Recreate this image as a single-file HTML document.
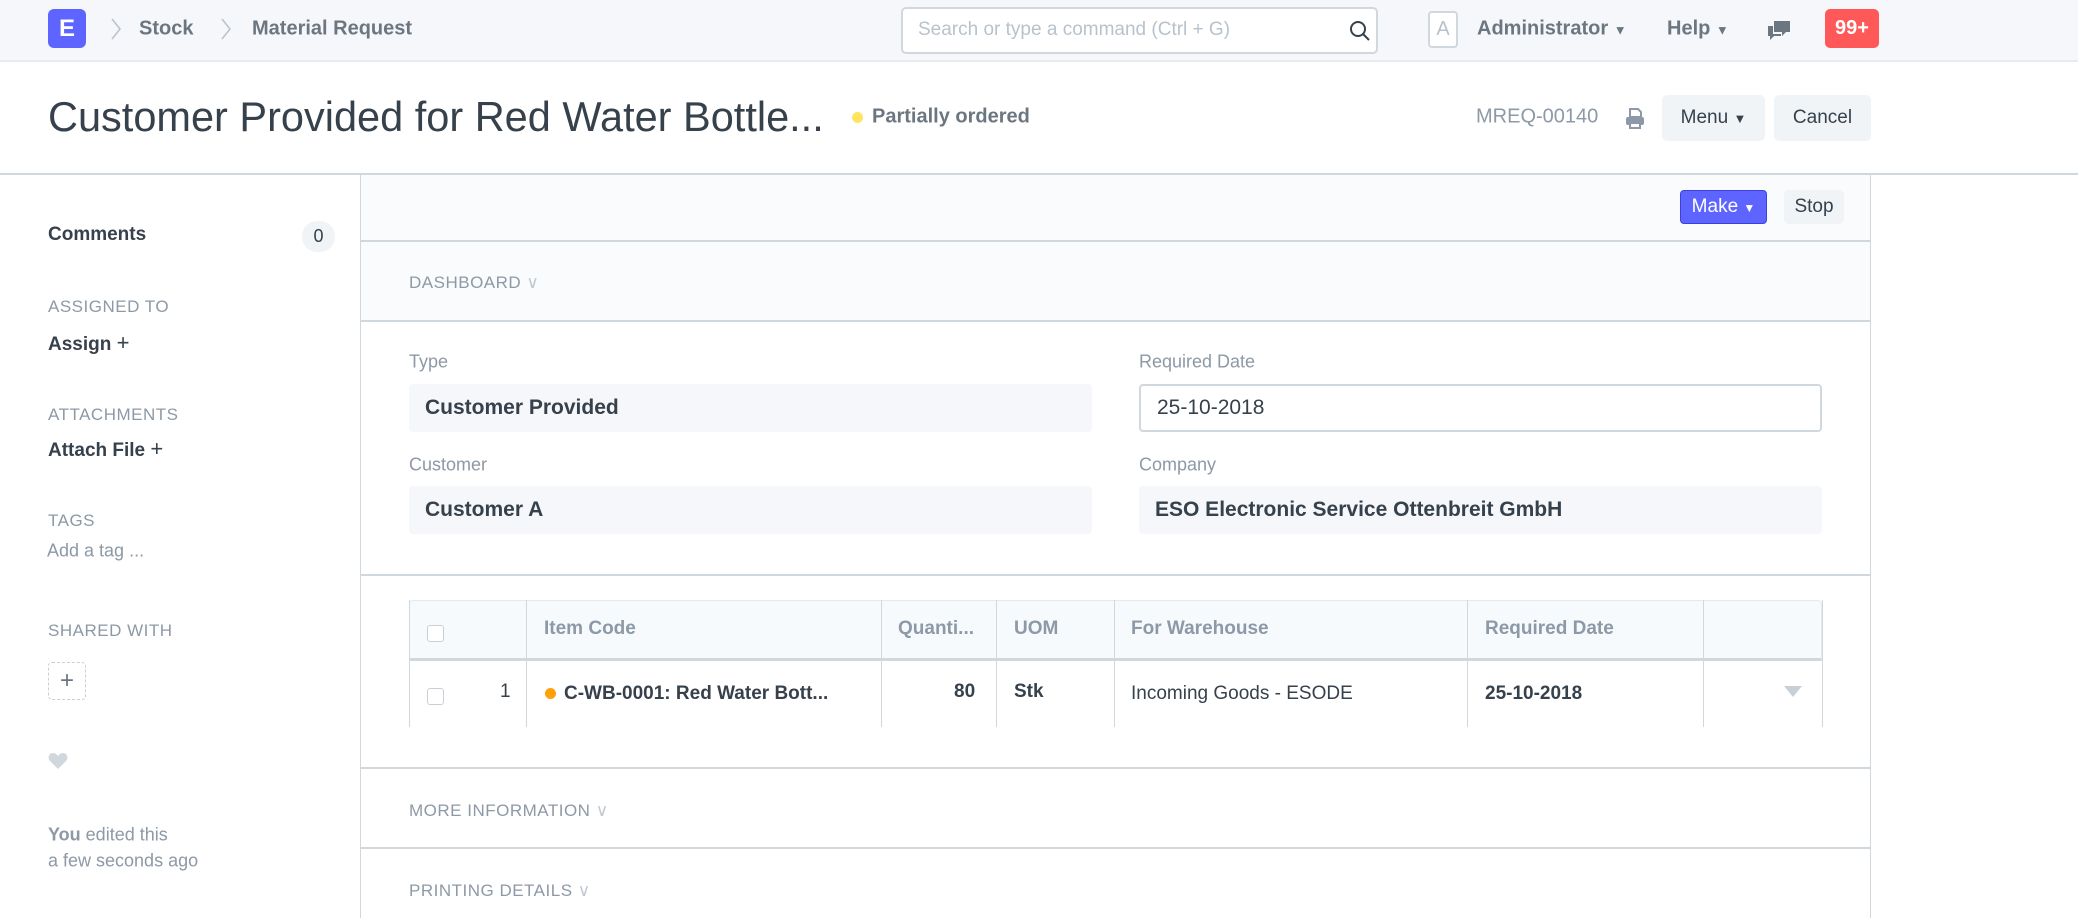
<!DOCTYPE html>
<html><head><meta charset="utf-8"><style>
*{box-sizing:border-box;margin:0;padding:0}
body{width:2078px;height:918px;overflow:hidden;background:#fff;font-family:"Liberation Sans",sans-serif;color:#36414c;position:relative}
.a{position:absolute;white-space:nowrap}
.nav{left:0;top:0;width:2078px;height:62px;background:#f5f7fa;border-bottom:2px solid #e8ebee}
.t{transform:translateY(-50%)}
.gray{color:#8d99a6}
.lbl{font-size:18px;color:#8d99a6}
.inp{background:#f5f7fa;border-radius:4px;height:48px;font-size:21px;font-weight:bold;color:#36414c;padding:0 16px;line-height:48px}
.btn{background:#f0f4f7;border-radius:5px;font-size:19px;color:#36414c;text-align:center}
.sec{font-size:17px;color:#8d99a6;letter-spacing:0.5px}
.hl{left:360px;width:1511px;height:2px;background:#d1d8dd}
.th{font-size:19px;font-weight:bold;color:#8d99a6}
.td{font-size:19px}
.vl{width:1px;background:#d1d8dd;top:600px;height:127px}
.cb{width:17px;height:17px;border:1px solid #c8cfd6;border-radius:3px;background:#fff}
</style></head><body>
<div class="a nav"></div>
<div class="a" style="left:48px;top:9px;width:38px;height:39px;background:#5e64ff;border-radius:6px;color:#fff;font-weight:bold;font-size:24px;text-align:center;line-height:39px">E</div>
<svg class="a" style="left:110px;top:18px" width="12" height="22" viewBox="0 0 12 22"><path d="M2 1l8 10-8 10" fill="none" stroke="#b8c2cc" stroke-width="1.5"/></svg>
<div class="a" style="left:139px;top:29px;font-size:20px;font-weight:bold;color:#6c7680" ><span class="t" style="display:block">Stock</span></div>
<svg class="a" style="left:220px;top:18px" width="12" height="22" viewBox="0 0 12 22"><path d="M2 1l8 10-8 10" fill="none" stroke="#b8c2cc" stroke-width="1.5"/></svg>
<div class="a" style="left:252px;top:29px;font-size:20px;font-weight:bold;color:#6c7680"><span class="t" style="display:block">Material Request</span></div>
<div class="a" style="left:901px;top:7px;width:477px;height:47px;background:#fff;border:2px solid #d1d8dd;border-radius:5px"></div>
<div class="a" style="left:918px;top:30px;font-size:19px;color:#b8c2cc"><span class="t" style="display:block">Search or type a command (Ctrl + G)</span></div>
<svg class="a" style="left:1348px;top:19px" width="24" height="24" viewBox="0 0 24 24"><circle cx="10" cy="10" r="7" fill="none" stroke="#36414c" stroke-width="2"/><path d="M15 15l6 6" stroke="#36414c" stroke-width="2"/></svg>
<div class="a" style="left:1428px;top:11px;width:30px;height:37px;border:2px solid #d1d8dd;border-radius:4px;background:#fff;color:#b8c2cc;font-size:20px;text-align:center;line-height:33px">A</div>
<div class="a" style="left:1477px;top:29px;font-size:20px;font-weight:bold;color:#6c7680"><span class="t" style="display:block">Administrator <span style="font-size:13px">▼</span></span></div>
<div class="a" style="left:1667px;top:29px;font-size:20px;font-weight:bold;color:#6c7680"><span class="t" style="display:block">Help <span style="font-size:13px">▼</span></span></div>
<svg class="a" style="left:1766px;top:19px" width="26" height="24" viewBox="0 0 26 24"><path d="M8 2h16v11h-4l-4 4v-4h-8z" fill="#6c7680"/><path d="M2 7h5v8h8v2h-7l-4 4v-4h-2z" fill="#6c7680"/></svg>
<div class="a" style="left:1825px;top:9px;width:54px;height:39px;background:#ff5858;border-radius:5px;color:#fff;font-weight:bold;font-size:20px;text-align:center;line-height:39px">99+</div>

<div class="a" style="left:48px;top:117px;font-size:41.5px;color:#36414c"><span class="t" style="display:block">Customer Provided for Red Water Bottle...</span></div>
<div class="a" style="left:852px;top:112px;width:11px;height:11px;border-radius:50%;background:#ffe55e"></div>
<div class="a" style="left:872px;top:117px;font-size:20px;font-weight:bold;color:#6c7680"><span class="t" style="display:block">Partially ordered</span></div>
<div class="a" style="left:1476px;top:117px;font-size:20px;color:#8d99a6"><span class="t" style="display:block">MREQ-00140</span></div>
<svg class="a" style="left:1624px;top:106px" width="22" height="24" viewBox="0 0 22 24"><path d="M6 3h8l3 3v5H6z" fill="none" stroke="#8d99a6" stroke-width="2"/><rect x="2" y="11" width="18" height="8" rx="2" fill="#8d99a6"/><rect x="6" y="17" width="10" height="5" fill="#fff" stroke="#8d99a6" stroke-width="2"/></svg>
<div class="a btn" style="left:1662px;top:95px;width:103px;height:46px;line-height:46px">Menu <span style="font-size:13px">▼</span></div>
<div class="a btn" style="left:1774px;top:95px;width:97px;height:46px;line-height:46px">Cancel</div>

<div class="a" style="left:0;top:173px;width:2078px;height:2px;background:#d1d8dd"></div>
<div class="a" style="left:360px;top:175px;width:1511px;height:743px;border-left:1px solid #d1d8dd;border-right:1px solid #d1d8dd"></div>
<div class="a" style="left:361px;top:175px;width:1509px;height:145px;background:#fafbfc"></div>
<div class="a" style="left:1680px;top:190px;width:87px;height:34px;background:#5e64ff;border:1px solid #3b41e0;border-radius:4px;color:#fff;font-size:19px;text-align:center;line-height:32px">Make <span style="font-size:12px">▼</span></div>
<div class="a btn" style="left:1784px;top:190px;width:60px;height:34px;line-height:34px">Stop</div>
<div class="a hl" style="top:240px"></div>
<div class="a sec" style="left:409px;top:283px"><span class="t" style="display:block">DASHBOARD <span style="color:#c0c8d0">∨</span></span></div>
<div class="a hl" style="top:320px"></div>

<div class="a lbl" style="left:409px;top:362px"><span class="t" style="display:block">Type</span></div>
<div class="a inp" style="left:409px;top:384px;width:683px">Customer Provided</div>
<div class="a lbl" style="left:1139px;top:362px"><span class="t" style="display:block">Required Date</span></div>
<div class="a inp" style="left:1139px;top:384px;width:683px;background:#fff;border:2px solid #d1d8dd;font-weight:normal;line-height:44px">25-10-2018</div>
<div class="a lbl" style="left:409px;top:465px"><span class="t" style="display:block">Customer</span></div>
<div class="a inp" style="left:409px;top:486px;width:683px">Customer A</div>
<div class="a lbl" style="left:1139px;top:465px"><span class="t" style="display:block">Company</span></div>
<div class="a inp" style="left:1139px;top:486px;width:683px">ESO Electronic Service Ottenbreit GmbH</div>
<div class="a hl" style="top:574px"></div>

<div class="a" style="left:409px;top:600px;width:1413px;height:61px;background:#f7fafc;border:1px solid #e5e9ed;border-bottom:3px solid #d1d8dd;border-radius:4px 4px 0 0"></div>
<div class="a vl" style="left:409px"></div><div class="a vl" style="left:526px"></div><div class="a vl" style="left:881px"></div><div class="a vl" style="left:996px"></div><div class="a vl" style="left:1114px"></div><div class="a vl" style="left:1467px"></div><div class="a vl" style="left:1703px"></div><div class="a vl" style="left:1822px"></div>
<div class="a cb" style="left:427px;top:625px"></div>
<div class="a th" style="left:544px;top:629px"><span class="t" style="display:block">Item Code</span></div>
<div class="a th" style="left:898px;top:629px"><span class="t" style="display:block">Quanti...</span></div>
<div class="a th" style="left:1014px;top:629px"><span class="t" style="display:block">UOM</span></div>
<div class="a th" style="left:1131px;top:629px"><span class="t" style="display:block">For Warehouse</span></div>
<div class="a th" style="left:1485px;top:629px"><span class="t" style="display:block">Required Date</span></div>
<div class="a cb" style="left:427px;top:688px"></div>
<div class="a td" style="left:500px;top:692px;color:#36414c"><span class="t" style="display:block">1</span></div>
<div class="a" style="left:545px;top:688px;width:11px;height:11px;border-radius:50%;background:#ffa00a"></div>
<div class="a td" style="left:564px;top:694px;font-weight:bold;color:#36414c"><span class="t" style="display:block">C-WB-0001: Red Water Bott...</span></div>
<div class="a td" style="left:954px;top:692px;font-weight:bold"><span class="t" style="display:block">80</span></div>
<div class="a td" style="left:1014px;top:692px;font-weight:bold"><span class="t" style="display:block">Stk</span></div>
<div class="a td" style="left:1131px;top:694px"><span class="t" style="display:block">Incoming Goods - ESODE</span></div>
<div class="a td" style="left:1485px;top:694px;font-weight:bold"><span class="t" style="display:block">25-10-2018</span></div>
<div class="a" style="left:1784px;top:686px;width:0;height:0;border-left:9px solid transparent;border-right:9px solid transparent;border-top:11px solid #c8cfd6"></div>

<div class="a hl" style="top:767px"></div>
<div class="a sec" style="left:409px;top:811px"><span class="t" style="display:block">MORE INFORMATION <span style="color:#c0c8d0">∨</span></span></div>
<div class="a hl" style="top:847px"></div>
<div class="a sec" style="left:409px;top:891px"><span class="t" style="display:block">PRINTING DETAILS <span style="color:#c0c8d0">∨</span></span></div>

<div class="a" style="left:48px;top:235px;font-size:19px;font-weight:bold"><span class="t" style="display:block">Comments</span></div>
<div class="a" style="left:302px;top:221px;width:33px;height:31px;border-radius:15px;background:#f0f4f7;font-size:18px;text-align:center;line-height:31px">0</div>
<div class="a sec" style="left:48px;top:307px"><span class="t" style="display:block">ASSIGNED TO</span></div>
<div class="a" style="left:48px;top:343px;font-size:19px;font-weight:bold"><span class="t" style="display:block">Assign <span style="font-weight:normal;font-size:22px">+</span></span></div>
<div class="a sec" style="left:48px;top:415px"><span class="t" style="display:block">ATTACHMENTS</span></div>
<div class="a" style="left:48px;top:449px;font-size:19px;font-weight:bold"><span class="t" style="display:block">Attach File <span style="font-weight:normal;font-size:22px">+</span></span></div>
<div class="a sec" style="left:48px;top:521px"><span class="t" style="display:block">TAGS</span></div>
<div class="a" style="left:47px;top:551px;font-size:18px;color:#8d99a6"><span class="t" style="display:block">Add a tag ...</span></div>
<div class="a sec" style="left:48px;top:631px"><span class="t" style="display:block">SHARED WITH</span></div>
<div class="a" style="left:48px;top:662px;width:38px;height:38px;border:1px dashed #c8cfd6;border-radius:4px;color:#6c7680;font-size:24px;text-align:center;line-height:35px">+</div>
<svg class="a" style="left:48px;top:752px" width="20" height="18" viewBox="0 0 20 18"><path d="M10 17L2 9C-1 6 1 1 5 1c2 0 4 1.5 5 3 1-1.5 3-3 5-3 4 0 6 5 3 8z" fill="#d1d8dd"/></svg>
<div class="a" style="left:48px;top:835px;font-size:18px;color:#8d99a6"><span class="t" style="display:block"><b>You</b> edited this</span></div>
<div class="a" style="left:48px;top:861px;font-size:18px;color:#8d99a6"><span class="t" style="display:block">a few seconds ago</span></div>
</body></html>
